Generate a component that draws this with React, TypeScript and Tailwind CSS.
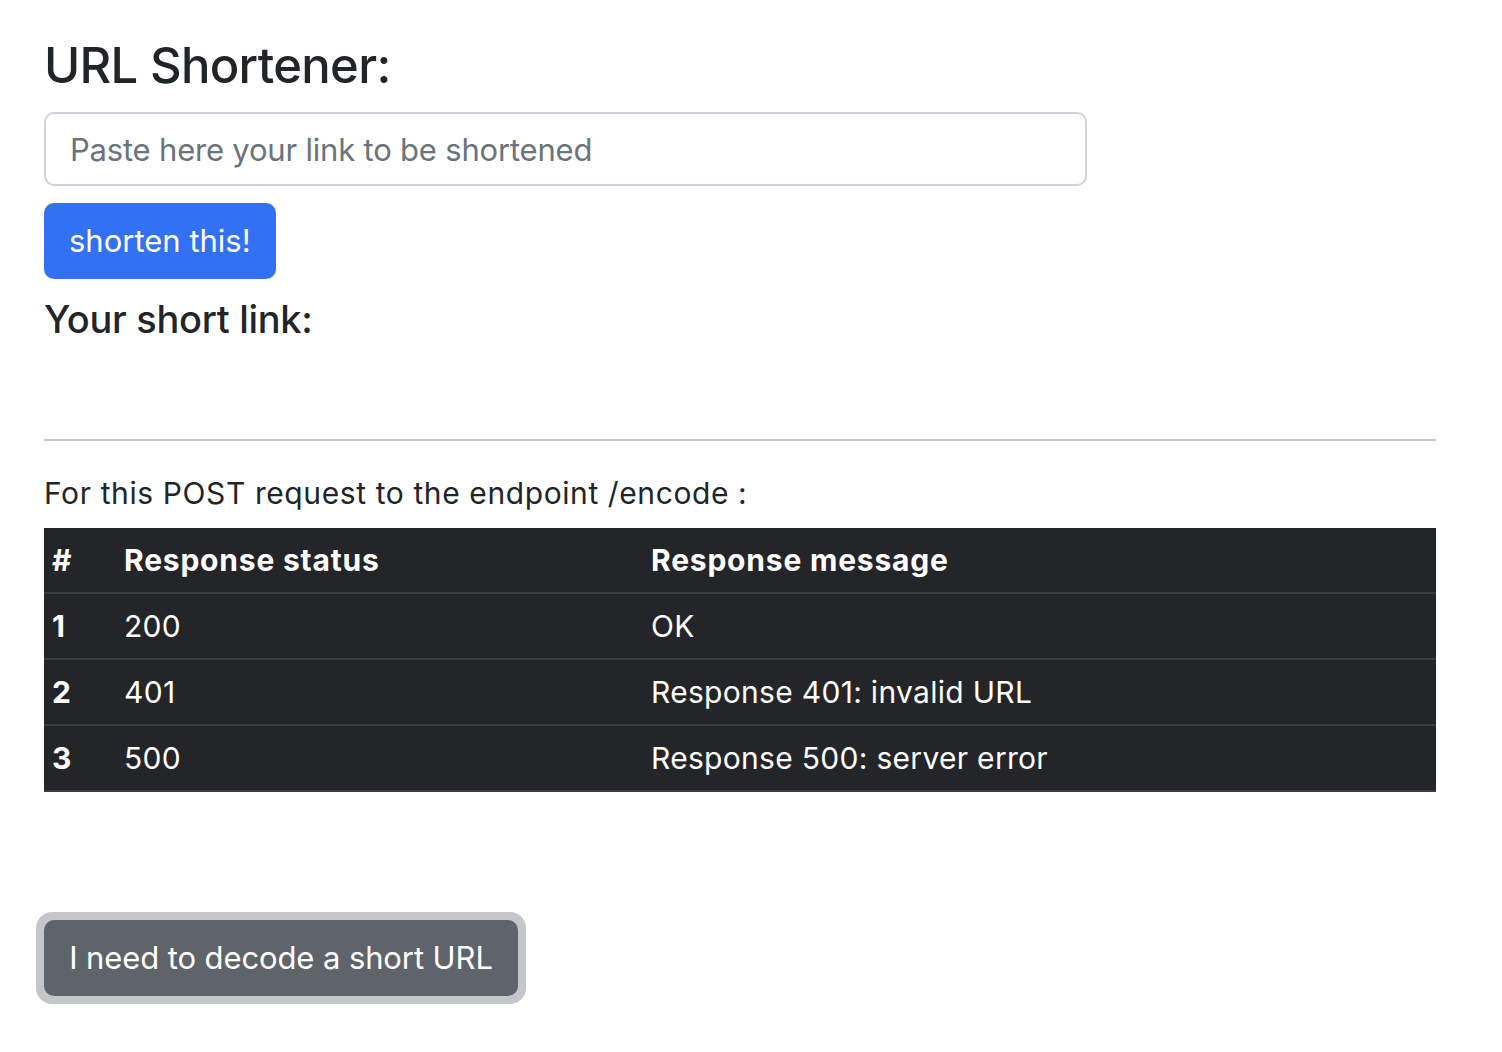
import React from 'react';

const rows = [
  { id: 1, status: '200', message: 'OK' },
  { id: 2, status: '401', message: 'Response 401: invalid URL' },
  { id: 3, status: '500', message: 'Response 500: server error' },
];

export default function App() {
  return (
    <div className="min-h-screen bg-white font-['Inter','Liberation_Sans',sans-serif] text-[#222528]">
      <div className="ml-[44px] w-[1392px] pt-[35px]">
        <h2 className="text-[49px] leading-[61px] font-medium tracking-[-0.7px] mb-[16px]">URL Shortener:</h2>
        <input
          type="text"
          placeholder="Paste here your link to be shortened"
          className="block w-[1043px] h-[74px] rounded-[10px] border-2 border-[#d0d4d9] px-[24px] text-[31px] tracking-[-0.2px] text-[#222528] placeholder:text-[#6b737b] outline-none"
        />
        <button
          type="button"
          className="mt-[17px] h-[76px] px-[25px] rounded-[10px] bg-[#3270f4] text-white text-[31px]"
        >
          shorten this!
        </button>
        <h4 className="mt-[17px] text-[38px] leading-[46px] font-medium tracking-[-0.3px]">Your short link:</h4>
        <hr className="mt-[97px] border-0 h-[2px] bg-[#c8c8c8]" />
        <p className="mt-[33px] text-[30px] leading-[38px] tracking-[0.6px]">For this POST request to the endpoint /encode :</p>
        <table className="mt-[16px] w-full border-collapse bg-[#232529] text-white text-[30px] leading-[38px] tracking-[0.3px]">
          <thead>
            <tr className="border-b-2 border-[#3a3d40]">
              <th className="w-[72px] h-[65px] pl-[8px] text-left font-bold tracking-[0.8px]">#</th>
              <th className="w-[527px] pl-[8px] text-left font-bold tracking-[0.8px]">Response status</th>
              <th className="pl-[8px] text-left font-bold tracking-[0.8px]">Response message</th>
            </tr>
          </thead>
          <tbody>
            {rows.map((r) => (
              <tr key={r.id} className="border-b-2 border-[#3a3d40]">
                <td className="h-[66px] pl-[8px] font-bold">{r.id}</td>
                <td className="pl-[8px]">{r.status}</td>
                <td className="pl-[8px]">{r.message}</td>
              </tr>
            ))}
          </tbody>
        </table>
        <div className="mt-[120px] -ml-[8px] inline-block rounded-[16px] bg-[#c3c6ca] p-[8px]">
          <button
            type="button"
            className="h-[76px] w-[474px] rounded-[10px] bg-[#5f636a] text-white text-[31px] tracking-[-0.1px]"
          >
            I need to decode a short URL
          </button>
        </div>
      </div>
    </div>
  );
}
